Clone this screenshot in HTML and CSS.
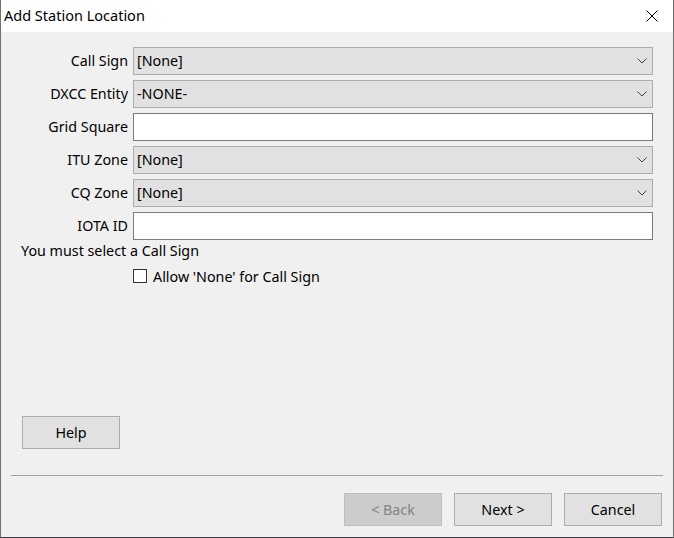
FILE: index.html
```html
<!DOCTYPE html>
<html>
<head>
<meta charset="utf-8">
<link rel="stylesheet" href="styles.css">
</head>
<body>
<div class="window">
  <div class="titlebar">
    <span class="title">Add Station Location</span>
    <svg class="close" width="12" height="12" viewBox="0 0 12 12"><path d="M0.5 0.5 L11.5 11.5 M11.5 0.5 L0.5 11.5" stroke="#000" stroke-width="1" fill="none"/></svg>
  </div>
  <div class="content">
    <div class="form">
      <label class="lbl">Call Sign</label>
      <div class="combo"><span>[None]</span><svg class="chev" width="10" height="6" viewBox="0 0 10 6"><path d="M0.5 0.5 L5 5 L9.5 0.5" stroke="#444" fill="none"/></svg></div>
      <label class="lbl">DXCC Entity</label>
      <div class="combo"><span>-NONE-</span><svg class="chev" width="10" height="6" viewBox="0 0 10 6"><path d="M0.5 0.5 L5 5 L9.5 0.5" stroke="#444" fill="none"/></svg></div>
      <label class="lbl">Grid Square</label>
      <div class="text"></div>
      <label class="lbl">ITU Zone</label>
      <div class="combo"><span>[None]</span><svg class="chev" width="10" height="6" viewBox="0 0 10 6"><path d="M0.5 0.5 L5 5 L9.5 0.5" stroke="#444" fill="none"/></svg></div>
      <label class="lbl">CQ Zone</label>
      <div class="combo"><span>[None]</span><svg class="chev" width="10" height="6" viewBox="0 0 10 6"><path d="M0.5 0.5 L5 5 L9.5 0.5" stroke="#444" fill="none"/></svg></div>
      <label class="lbl">IOTA ID</label>
      <div class="text"></div>
    </div>
    <div class="msg">You must select a Call Sign</div>
    <div class="check-row"><span class="checkbox"></span><span>Allow 'None' for Call Sign</span></div>
    <div class="help-row"><div class="btn">Help</div></div>
    <div class="sep"></div>
    <div class="buttons">
      <div class="btn disabled">&lt; Back</div>
      <div class="btn">Next &gt;</div>
      <div class="btn">Cancel</div>
    </div>
  </div>
</div>
</body>
</html>
```
FILE: styles.css
```css
html, body {
  margin: 0;
  padding: 0;
}
body {
  font-family: "Noto Sans", "Open Sans", sans-serif;
  font-size: 14.3px;
  color: #000;
  background: #1d2433;
}
.window {
  width: 674px;
  height: 538px;
  box-sizing: border-box;
  border-left: 1px solid #6f6f6f;
  border-right: 1px solid #6f6f6f;
  border-bottom: 1px solid #3a3f48;
  display: flex;
  flex-direction: column;
  background: #f0f0f0;
}
.titlebar {
  height: 32px;
  flex: none;
  background: #fff;
  display: flex;
  align-items: center;
  justify-content: space-between;
  padding: 0 15px 0 3px;
}
.title {
  font-size: 14.5px;
  position: relative;
  top: -1px;
}
.close {
  display: block;
}
.content {
  flex: 1;
  display: flex;
  flex-direction: column;
}
.form {
  display: grid;
  grid-template-columns: 127px 520px;
  grid-auto-rows: 28px;
  column-gap: 5px;
  row-gap: 5px;
  padding-top: 15px;
}
.lbl {
  display: flex;
  align-items: center;
  justify-content: flex-end;
  padding-bottom: 1px;
}
.combo {
  box-sizing: border-box;
  background: #e1e1e1;
  border: 1px solid #adadad;
  display: flex;
  align-items: center;
  justify-content: space-between;
  padding: 0 5px 1px 3px;
}
.chev {
  display: block;
}
.text {
  box-sizing: border-box;
  background: #fff;
  border: 1px solid #7a7a7a;
}
.msg {
  margin-top: 2px;
  padding-left: 20px;
  height: 18px;
  line-height: 18px;
}
.check-row {
  margin-top: 6px;
  padding-left: 132px;
  display: flex;
  align-items: center;
  height: 20px;
  gap: 6px;
}
.checkbox {
  width: 14px;
  height: 14px;
  box-sizing: border-box;
  border: 1px solid #333;
  background: #fff;
}
.help-row {
  margin-top: 130px;
  padding-left: 21px;
}
.btn {
  box-sizing: border-box;
  width: 98px;
  height: 33px;
  background: #e1e1e1;
  border: 1px solid #adadad;
  display: flex;
  align-items: center;
  justify-content: center;
}
.btn.disabled {
  background: #cccccc;
  border-color: #bfbfbf;
  color: #838383;
}
.sep {
  margin: 26px 10px 0 10px;
  height: 1px;
  background: #a0a0a0;
}
.buttons {
  margin-top: 17px;
  display: flex;
  justify-content: flex-end;
  gap: 12px;
  padding-right: 11px;
}
```
